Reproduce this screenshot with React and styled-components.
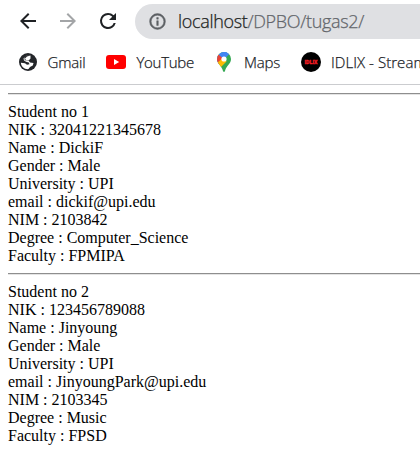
import React from "react";
import styled, { createGlobalStyle } from "styled-components";

const GlobalStyle = createGlobalStyle`
  * { box-sizing: border-box; }
  body { margin: 0; background: #fff; overflow: hidden; }
`;

const Window = styled.div`
  width: 420px;
  height: 461px;
  overflow: hidden;
  background: #fff;
`;

const Toolbar = styled.header`
  display: flex;
  align-items: center;
  height: 42px;
  padding-left: 16px;
  gap: 16px;
`;

const NavIcon = styled.svg`
  flex: none;
  width: 24px;
  height: 24px;
  fill: ${(p) => (p.$muted ? "#a3a5a7" : "#1f2124")};
`;

const AddressBar = styled.div`
  display: flex;
  align-items: center;
  flex: none;
  width: 420px;
  height: 35px;
  margin-left: -1px;
  padding-left: 13px;
  border-radius: 18px;
  background: #dfe0e3;
`;

const InfoIcon = styled.svg`
  flex: none;
  width: 19px;
  height: 19px;
  fill: #5c5f63;
`;

const Url = styled.span`
  margin-left: 11px;
  font: 300 18px/26px "Open Sans", sans-serif;
  letter-spacing: -0.33px;
  -webkit-text-stroke: 0.25px currentColor;
  white-space: nowrap;
  color: #62656a;
`;

const Host = styled.span`
  color: #1c1e21;
`;

const Bookmarks = styled.nav`
  display: flex;
  height: 43px;
  padding-left: 18px;
  border-bottom: 1px solid #cbcccf;
`;

const Bookmark = styled.div`
  display: flex;
  align-items: center;
  flex: none;
  width: ${(p) => p.$width}px;
  height: 40px;
  gap: ${(p) => p.$gap}px;
`;

const BookmarkIcon = styled.svg`
  flex: none;
  width: ${(p) => p.$size}px;
  height: 20px;
`;

const Label = styled.span`
  font: 300 15px/22px "Open Sans", sans-serif;
  letter-spacing: ${(p) => p.$spacing}px;
  -webkit-text-stroke: 0.25px currentColor;
  white-space: nowrap;
  color: #202226;
`;

const Page = styled.main`
  padding: 8px 0 0 8px;
  font: 16px/18px "Liberation Serif", "Times New Roman", serif;
  color: #000;
`;

const Rule = styled.hr`
  height: 2px;
  margin: 0 0 8px;
  border: 0;
  border-top: 1px solid #8e8e8e;
  border-bottom: 1px solid #e4e4e4;
`;

const Record = styled.section`
  margin-bottom: 8px;
`;

const Line = styled.div`
  height: 18px;
  white-space: nowrap;
`;

const students = [
  ["Student no 1", "NIK : 32041221345678", "Name : DickiF", "Gender : Male", "University : UPI", "email : dickif@upi.edu", "NIM : 2103842", "Degree : Computer_Science", "Faculty : FPMIPA"],
  ["Student no 2", "NIK : 123456789088", "Name : Jinyoung", "Gender : Male", "University : UPI", "email : JinyoungPark@upi.edu", "NIM : 2103345", "Degree : Music", "Faculty : FPSD"],
];

const Globe = () => (
  <BookmarkIcon $size={20} viewBox="0 0 20 20">
    <circle cx="10" cy="10" r="9" fill="#24262a" />
    <path d="M12.500 3.300C9.500 3 7.500 4 6.500 6L6.800 8.200 10.500 8.600 12 10.500 15.500 11 14.800 13.500 12 15 10.500 17.100C6.300 17.500 3 14.500 2.900 10.700L7 11.200 9 12.800 11.500 12.300 10.800 10.500 8 9.700 6 8.500 5.500 6.500 8.500 3.800z" fill="#fff" />
    <path d="M12.500 3.300L9.500 4.500 8.500 6.500 10 8 13 7.500 15 9 16.800 8.500C16.300 6 15 4.200 12.500 3.300z" fill="#24262a" />
    <path d="M12.500 3.500L9 4.500 7 6.500 8 8.300 11 8.200 12.500 6.500z" fill="#fff" />
  </BookmarkIcon>
);

const YouTube = () => (
  <BookmarkIcon $size={20} viewBox="0 0 20 20">
    <rect y="3" width="20" height="14" rx="3" fill="#f00" />
    <path d="M8 7l5.200 3L8 13z" fill="#fff" />
  </BookmarkIcon>
);

const Maps = () => (
  <BookmarkIcon $size={14} viewBox="0 0 14 20">
    <defs>
      <clipPath id="pin">
        <path d="M7 0a7 7 0 0 1 7 7c0 5-4.6 6.500-6 12q-1 2-2 0C4.600 13.500 0 11.500 0 7a7 7 0 0 1 7-7z" />
      </clipPath>
    </defs>
    <g clipPath="url(#pin)">
      <path d="M0 0h14v20H0z" fill="#34a853" />
      <path d="M0 14L14-2 9-2-2 6z" fill="#4285f4" />
      <path d="M1.700 2.400L7 7 0 14-2 4z" fill="#ea4335" />
      <path d="M0 11L7 5l2.500 4.500L3 16z" fill="#fbbc04" />
      <path d="M1.700 2.400L5-1h6l1.300 3L7 7.500z" fill="#4285f4" />
    </g>
    <circle cx="7" cy="7" r="2.600" fill="#fff" />
  </BookmarkIcon>
);

const IdlixText = styled.text`
  font: 900 6px "Roboto", sans-serif;
  fill: #f51d24;
  stroke: #f51d24;
  stroke-width: 0.3px;
`;

const Idlix = () => (
  <BookmarkIcon $size={20} viewBox="0 0 20 20">
    <circle cx="10" cy="10" r="10" fill="#000" />
    <IdlixText x="10" y="12.200" textAnchor="middle" textLength="13" lengthAdjust="spacingAndGlyphs">IDLIX</IdlixText>
  </BookmarkIcon>
);

export default function App() {
  return (
    <Window>
      <GlobalStyle />
      <Toolbar>
        <NavIcon viewBox="0 0 24 24"><path d="M20 11H7.830l5.590-5.590L12 4l-8 8 8 8 1.410-1.410L7.830 13H20z" /></NavIcon>
        <NavIcon $muted viewBox="0 0 24 24"><path d="M4 11h12.170l-5.590-5.590L12 4l8 8-8 8-1.410-1.410L16.170 13H4z" /></NavIcon>
        <NavIcon viewBox="0 0 24 24"><path d="M17.650 6.350A7.960 7.960 0 0 0 12 4a8 8 0 1 0 7.730 10h-2.080A6 6 0 1 1 12 6c1.660 0 3.140.690 4.220 1.780L13 11h7V4z" /></NavIcon>
        <AddressBar>
          <InfoIcon viewBox="0 0 24 24"><path d="M11 7h2v2h-2zm0 4h2v6h-2zm1-9a10 10 0 1 0 0 20 10 10 0 0 0 0-20zm0 18a8 8 0 1 1 0-16 8 8 0 0 1 0 16z" stroke="#5c5f63" strokeWidth="0.600" /></InfoIcon>
          <Url><Host>localhost</Host>/DPBO/tugas2/</Url>
        </AddressBar>
      </Toolbar>
      <Bookmarks>
        <Bookmark $width={88} $gap={9.5}><Globe /><Label $spacing={-0.2}>Gmail</Label></Bookmark>
        <Bookmark $width={111} $gap={10.5}><YouTube /><Label $spacing={-0.3}>YouTube</Label></Bookmark>
        <Bookmark $width={84} $gap={13}><Maps /><Label $spacing={-0.2}>Maps</Label></Bookmark>
        <Bookmark $width={160} $gap={10}><Idlix /><Label $spacing={0.05}>IDLIX - Stream</Label></Bookmark>
      </Bookmarks>
      <Page>
        {students.map((lines) => (
          <React.Fragment key={lines[0]}>
            <Rule />
            <Record>{lines.map((line) => <Line key={line}>{line}</Line>)}</Record>
          </React.Fragment>
        ))}
      </Page>
    </Window>
  );
}
